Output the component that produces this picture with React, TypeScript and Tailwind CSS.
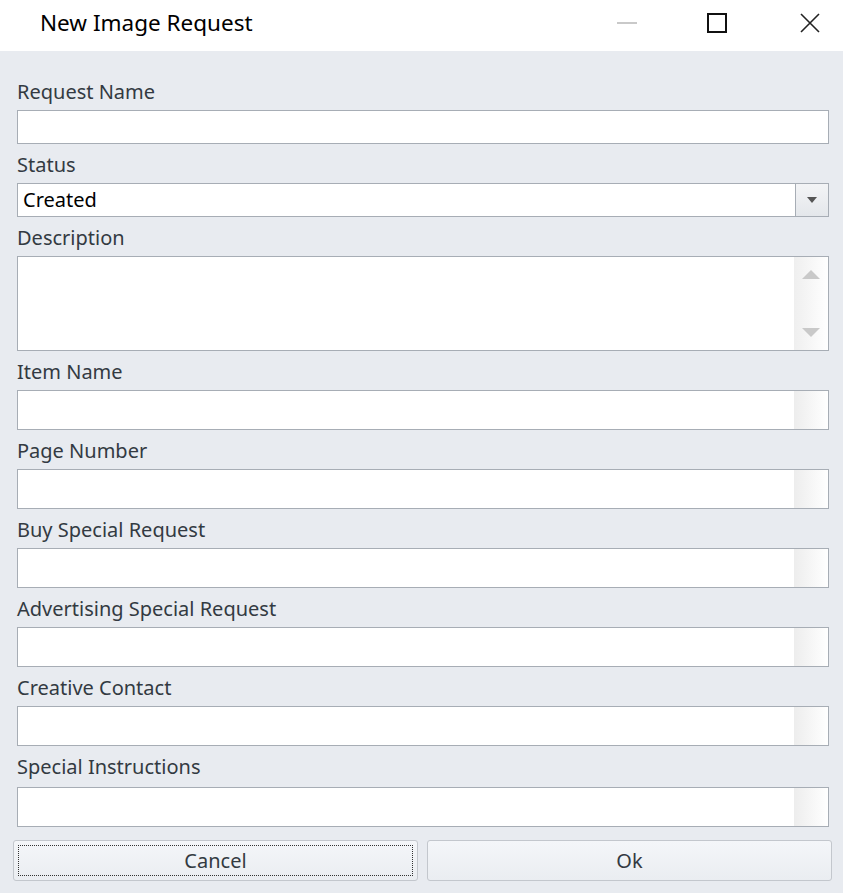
import type { ReactNode } from "react";

const font = { fontFamily: '"Noto Sans", "Open Sans", sans-serif' };

function Label({ children, last }: { children: ReactNode; last?: boolean }) {
  return (
    <div
      className={`flex items-start pt-[8px] text-[20px] leading-[26px] text-[#333a42] ${last ? "h-[41px]" : "h-[39px]"}`}
    >
      {children}
    </div>
  );
}

function TextBox({ tall, plain }: { tall?: boolean; plain?: boolean }) {
  return (
    <div
      className={`flex w-full border border-[#a7adb5] bg-white ${tall ? "h-[40px]" : "h-[34px]"}`}
    >
      <div className="flex-1" />
      {plain ? null : <div className="w-[34px] bg-gradient-to-r from-[#ededed] to-white" />}
    </div>
  );
}

function WindowControls() {
  return (
    <div className="flex items-center">
      <div className="mr-[70px] h-[2px] w-[20px] bg-[#c9c9c9]" />
      <div className="mr-[73px] h-[20px] w-[20px] border-2 border-[#111]" />
      <svg width="20" height="20" viewBox="0 0 20 20" className="mr-[23px]">
        <path d="M1 1 L19 19 M19 1 L1 19" stroke="#222" strokeWidth="1.6" fill="none" />
      </svg>
    </div>
  );
}

export default function App() {
  const fields = [
    "Item Name",
    "Page Number",
    "Buy Special Request",
    "Advertising Special Request",
    "Creative Contact",
  ];
  return (
    <div className="flex h-[893px] w-[843px] flex-col bg-[#e8ebf0]" style={font}>
      <div className="flex h-[51px] shrink-0 items-center justify-between bg-white pb-[5px]">
        <div className="pl-[40px] text-[22.5px] leading-none text-black">New Image Request</div>
        <WindowControls />
      </div>

      <div className="flex flex-col pl-[17px] pr-[14px] pt-[20px]">
        <Label>Request Name</Label>
        <TextBox plain />

        <Label>Status</Label>
        <div className="flex h-[34px] border border-[#a7adb5] bg-white">
          <div className="flex flex-1 items-center pl-[5px] text-[20px] text-black">Created</div>
          <div className="flex w-[33px] items-center justify-center border-l border-[#a7adb5] bg-gradient-to-b from-[#f3f4f6] to-[#e4e7eb]">
            <svg width="10" height="6" viewBox="0 0 10 6">
              <path d="M0 0 H10 L5 6 Z" fill="#555" />
            </svg>
          </div>
        </div>

        <Label>Description</Label>
        <div className="flex h-[95px] border border-[#a7adb5] bg-white">
          <div className="flex-1" />
          <div className="flex w-[34px] flex-col items-center justify-between bg-gradient-to-r from-[#efefef] to-white py-[13px]">
            <svg width="18" height="9" viewBox="0 0 18 9">
              <path d="M0 9 L9 0 L18 9 Z" fill="#c9c9c9" />
            </svg>
            <svg width="18" height="9" viewBox="0 0 18 9">
              <path d="M0 0 L18 0 L9 9 Z" fill="#c9c9c9" />
            </svg>
          </div>
        </div>

        {fields.map((f) => (
          <div key={f} className="flex flex-col">
            <Label>{f}</Label>
            <TextBox tall />
          </div>
        ))}

        <Label last>Special Instructions</Label>
        <TextBox tall />
      </div>

      <div className="mt-[13px] flex gap-[9px] pl-[13px]">
        <button
          type="button"
          className="h-[41px] w-[405px] rounded-[3px] border border-[#c3c7cd] bg-gradient-to-b from-[#f4f6f9] to-[#eaedf1] p-[4px] text-[20px] text-[#333a42]"
        >
          <div className="flex h-full items-center justify-center border border-dotted border-[#333]">Cancel</div>
        </button>
        <button
          type="button"
          className="flex h-[41px] w-[405px] items-center justify-center rounded-[3px] border border-[#c3c7cd] bg-gradient-to-b from-[#f4f6f9] to-[#eaedf1] text-[20px] text-[#333a42]"
        >
          Ok
        </button>
      </div>
    </div>
  );
}
